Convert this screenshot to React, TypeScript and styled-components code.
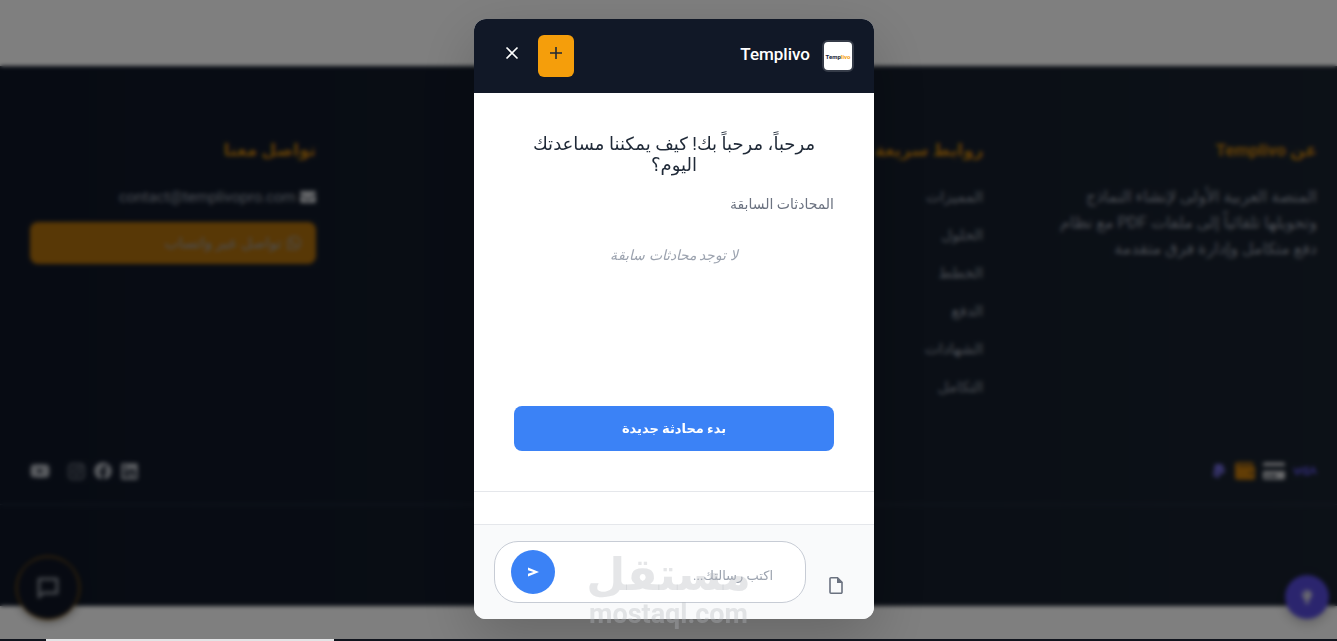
import React from 'react';
import styled, { createGlobalStyle } from 'styled-components';
import {
  FaEnvelope, FaWhatsapp, FaYoutube, FaInstagram, FaFacebook, FaLinkedin,
  FaPaypal, FaWallet, FaCreditCard, FaLightbulb,
} from 'react-icons/fa';

const GlobalStyle = createGlobalStyle`
  *, *::before, *::after { box-sizing: border-box; }
  body {
    margin: 0;
    background: #fff;
    font-family: Roboto, 'DejaVu Sans', sans-serif;
    overflow: hidden;
  }
  button, input { font-family: inherit; }
  h1, h2, h3, p, ul { margin: 0; padding: 0; }
`;

const Page = styled.div`
  direction: rtl;
  min-height: 100vh;
  padding-top: 66px;
`;

const Footer = styled.footer`
  display: flex;
  flex-direction: column;
  min-height: 540px;
  padding-top: 68px;
  background: linear-gradient(270deg, #19222f, #0f1727);
  color: #979eaa;
  font-size: 15px;
`;

const Columns = styled.div`
  display: grid;
  grid-template-columns: repeat(4, 1fr);
  gap: 48px;
  padding: 0 20px 0 30px;
`;

const Column = styled.section<{ $start?: number }>`
  grid-column-start: ${(p) => p.$start ?? 'auto'};
`;

const ColumnTitle = styled.h3`
  margin-bottom: 18px;
  color: #c9810c;
  font-size: 17px;
  font-weight: 700;
  line-height: 32px;
`;

const About = styled.p`
  font-size: 16px;
  line-height: 26px;
  white-space: nowrap;
`;

const LinkList = styled.ul`
  display: flex;
  flex-direction: column;
  gap: 12px;
  list-style: none;
`;

const FooterLink = styled.a`
  display: flex;
  align-items: center;
  gap: 4px;
  color: inherit;
  line-height: 26px;
  text-decoration: none;
`;

const WhatsAppLink = styled(FooterLink)`
  height: 42px;
  margin-top: 12px;
  padding: 0 14px;
  border-radius: 8px;
  background: #b1700c;
`;

const IconBar = styled.div`
  display: flex;
  justify-content: space-between;
  align-items: center;
  margin-top: auto;
  padding: 0 20px 22px 30px;
  border-bottom: 1px solid #2a3546;
`;

const IconGroup = styled.div`
  display: flex;
  align-items: center;
  gap: 8px;
`;

const IconLink = styled.a<{ $color?: string; $gap?: number }>`
  display: flex;
  margin-inline-start: ${(p) => p.$gap ?? 0}px;
  color: ${(p) => p.$color ?? '#b4b9c1'};
`;

const Legal = styled.div`
  height: 101px;
`;

const Fab = styled.button<{ $size: number }>`
  display: flex;
  align-items: center;
  justify-content: center;
  position: fixed;
  width: ${(p) => p.$size}px;
  height: ${(p) => p.$size}px;
  padding: 0;
  border: 0;
  border-radius: 50%;
`;

const ChatFab = styled(Fab)`
  left: 16px;
  bottom: 21px;
  border: 1px solid #c47f0c;
  background: #0f1524;
  color: #8a909a;
  box-shadow: 0 2px 8px rgba(0, 0, 0, 0.4);
`;

const TipFab = styled(Fab)`
  right: 8px;
  bottom: 22px;
  background: #574bdd;
  color: #d5d5e0;
  box-shadow: 0 4px 12px rgba(0, 0, 0, 0.25);
`;

const Overlay = styled.div`
  display: flex;
  align-items: center;
  justify-content: center;
  position: fixed;
  inset: 0;
  padding: 0 0 3px 11px;
  direction: rtl;
  background: rgba(0, 0, 0, 0.5);
  backdrop-filter: blur(2px);
`;

const Dialog = styled.div`
  display: flex;
  flex-direction: column;
  width: 400px;
  max-width: 100%;
  height: 600px;
  overflow: hidden;
  border-radius: 12px;
  background: #fff;
  box-shadow: 0 20px 60px rgba(0, 0, 0, 0.2);
`;

const DialogHeader = styled.header`
  display: flex;
  align-items: center;
  gap: 8px;
  height: 74px;
  padding: 0 20px;
  background: #111827;
`;

const Avatar = styled.span`
  display: flex;
  align-items: center;
  justify-content: center;
  width: 32px;
  height: 32px;
  border: 2px solid #353b48;
  border-radius: 6px;
  background: #fff;
  color: #20263a;
  direction: ltr;
  font-size: 6px;
  font-weight: 700;
`;

const Accent = styled.span`
  color: #f59e0b;
`;

const DialogTitle = styled.h2`
  flex: 1;
  padding: 0 4px 4px 0;
  color: #fff;
  font-size: 17px;
  font-weight: 500;
`;

const HeaderButton = styled.button<{ $filled?: boolean }>`
  display: flex;
  align-items: center;
  justify-content: center;
  width: 36px;
  height: 42px;
  padding: 0 0 6px;
  border: 0;
  border-radius: 6px;
  background: ${(p) => (p.$filled ? '#f59e0b' : 'transparent')};
  color: ${(p) => (p.$filled ? '#1f2937' : '#fff')};
`;

const DialogBody = styled.div`
  display: flex;
  flex: 1;
  flex-direction: column;
  padding: 40px;
`;

const Welcome = styled.p`
  color: #1f2937;
  font-size: 18px;
  line-height: 21px;
  text-align: center;
`;

const HistoryTitle = styled.h3`
  margin-top: 17px;
  color: #6b7280;
  font-size: 14px;
  font-weight: 500;
  line-height: 24px;
`;

const Empty = styled.p`
  margin-top: 27px;
  color: #9ca3af;
  font-size: 14px;
  font-style: italic;
  line-height: 24px;
  text-align: center;
`;

const StartButton = styled.button`
  height: 45px;
  margin-top: auto;
  border: 0;
  border-radius: 8px;
  background: #3b82f6;
  color: #fff;
  font-size: 13px;
  font-weight: 700;
`;

const Divider = styled.div`
  height: 33px;
  border-top: 1px solid #e5e7eb;
`;

const Composer = styled.form`
  display: flex;
  gap: 12px;
  padding: 16px 20px;
  border-top: 1px solid #e5e7eb;
  background: #f9fafb;
`;

const AttachButton = styled.button`
  display: flex;
  align-items: flex-end;
  justify-content: center;
  width: 36px;
  padding: 0 0 9px;
  border: 0;
  background: none;
`;

const Field = styled.div`
  display: flex;
  flex: 1;
  align-items: center;
  height: 62px;
  padding: 0 32px 0 16px;
  border: 1px solid #c7ccd5;
  border-radius: 24px;
  background: #fff;
`;

const MessageInput = styled.input`
  flex: 1;
  min-width: 0;
  padding: 6px 0 0;
  border: 0;
  outline: 0;
  background: none;
  font-size: 13px;
  &::placeholder { color: #9ca3af; }
`;

const SendButton = styled.button`
  display: flex;
  align-items: center;
  justify-content: center;
  width: 44px;
  height: 44px;
  padding: 0;
  border: 0;
  border-radius: 50%;
  background: #3b82f6;
`;

const Watermark = styled.div`
  display: flex;
  flex-direction: column;
  align-items: center;
  position: fixed;
  left: 50%;
  bottom: 13px;
  width: 162px;
  margin-left: -81px;
  color: rgba(180, 184, 190, 0.35);
  white-space: nowrap;
  pointer-events: none;
`;

const MarkName = styled.div`
  font-family: 'DejaVu Sans', sans-serif;
  font-size: 45px;
  font-weight: 700;
  line-height: 50px;
`;

const MarkDomain = styled.div`
  font-size: 27px;
  font-weight: 700;
  line-height: 28px;
`;

const BottomStrip = styled.div`
  position: fixed;
  inset: auto 0 0 0;
  height: 2px;
  padding-left: 46px;
  background: #10141d;
`;

const StripHighlight = styled.div`
  width: 288px;
  height: 2px;
  background: #e3e4e6;
`;

const links = ['المميزات', 'الحلول', 'الخطط', 'الدفع', 'الشهادات', 'التكامل'];

export default function App() {
  return (
    <>
      <GlobalStyle />
      <Page>
        <Footer>
          <Columns>
            <Column>
              <ColumnTitle>عن Templivo</ColumnTitle>
              <About>
                المنصة العربية الأولى لإنشاء النماذج<br />
                وتحويلها تلقائياً إلى ملفات PDF مع نظام<br />
                دفع متكامل وإدارة فرق متقدمة
              </About>
            </Column>
            <Column>
              <ColumnTitle>روابط سريعة</ColumnTitle>
              <LinkList>
                {links.map((l) => (
                  <li key={l}><FooterLink href="#">{l}</FooterLink></li>
                ))}
              </LinkList>
            </Column>
            <Column $start={4}>
              <ColumnTitle>تواصل معنا</ColumnTitle>
              <FooterLink href="mailto:contact@templivopro.com">
                <FaEnvelope size={16} color="#d0d3d8" />contact@templivopro.com
              </FooterLink>
              <WhatsAppLink href="#"><FaWhatsapp size={16} />تواصل عبر واتساب</WhatsAppLink>
            </Column>
          </Columns>
          <IconBar>
            <IconGroup>
              <IconLink href="#" $color="#5b52d8" aria-label="Visa">
                <svg width="24" height="16" viewBox="0 0 24 16" fill="none" stroke="currentColor" strokeWidth="2">
                  <path d="M1 5l3 6 3-6M9 5v6M16 5h-4l3 6h-4M17 11l3-6 3 6" />
                </svg>
              </IconLink>
              <IconLink href="#" $color="#d4d6da" aria-label="Card"><FaCreditCard size={22} /></IconLink>
              <IconLink href="#" $color="#c47a0c" aria-label="Wallet"><FaWallet size={20} /></IconLink>
              <IconLink href="#" $color="#6f68d8" aria-label="PayPal"><FaPaypal size={16} /></IconLink>
            </IconGroup>
            <IconGroup>
              <IconLink href="#" aria-label="LinkedIn"><FaLinkedin size={19} /></IconLink>
              <IconLink href="#" aria-label="Facebook"><FaFacebook size={18} /></IconLink>
              <IconLink href="#" $color="#858b96" aria-label="Instagram"><FaInstagram size={19} /></IconLink>
              <IconLink href="#" $gap={9} aria-label="YouTube"><FaYoutube size={20} /></IconLink>
            </IconGroup>
          </IconBar>
          <Legal />
        </Footer>
        <ChatFab $size={64} type="button" aria-label="محادثة">
          <svg width="22" height="22" viewBox="0 0 22 22" fill="none" stroke="currentColor" strokeWidth="3">
            <path d="M2 20V2h18v14H6z" strokeLinejoin="round" />
          </svg>
        </ChatFab>
        <TipFab $size={44} type="button" aria-label="نصائح"><FaLightbulb size={14} /></TipFab>
      </Page>

      <Overlay>
        <Dialog role="dialog" aria-label="Templivo">
          <DialogHeader>
            <Avatar>Temp<Accent>livo</Accent></Avatar>
            <DialogTitle>Templivo</DialogTitle>
            <HeaderButton $filled type="button" aria-label="محادثة جديدة">
              <svg width="14" height="14" viewBox="0 0 14 14" stroke="currentColor" strokeWidth="1.6">
                <path d="M7 1v12M1 7h12" />
              </svg>
            </HeaderButton>
            <HeaderButton type="button" aria-label="إغلاق">
              <svg width="14" height="14" viewBox="0 0 14 14" stroke="currentColor" strokeWidth="1.6">
                <path d="M1.500 1.500l11 11M12.500 1.500l-11 11" />
              </svg>
            </HeaderButton>
          </DialogHeader>
          <DialogBody>
            <Welcome>مرحباً، مرحباً بك! كيف يمكننا مساعدتك اليوم؟</Welcome>
            <HistoryTitle>المحادثات السابقة</HistoryTitle>
            <Empty>لا توجد محادثات سابقة</Empty>
            <StartButton type="button">بدء محادثة جديدة</StartButton>
          </DialogBody>
          <Divider />
          <Composer onSubmit={(e) => e.preventDefault()}>
            <AttachButton type="button" aria-label="إرفاق ملف">
              <svg width="14" height="17" viewBox="0 0 14 17" fill="none" stroke="#6b7280" strokeWidth="1.6">
                <path d="M1 1.800a1 1 0 0 1 1-1h6.500L13 5.300v9.900a1 1 0 0 1-1 1H2a1 1 0 0 1-1-1z" />
                <path d="M8 0.500V6h5.500z" fill="#6b7280" stroke="none" />
              </svg>
            </AttachButton>
            <Field>
              <MessageInput aria-label="رسالتك" placeholder="اكتب رسالتك..." />
              <SendButton type="submit" aria-label="إرسال">
                <svg width="11" height="10" viewBox="0 0 11 10" fill="#fff">
                  <path d="M0 0.500L11 5L0 9.500V6.800L5.500 5L0 3.200z" />
                </svg>
              </SendButton>
            </Field>
          </Composer>
        </Dialog>
      </Overlay>
      <BottomStrip><StripHighlight /></BottomStrip>
      <Watermark>
        <MarkName>مستقل</MarkName>
        <MarkDomain>mostaql.com</MarkDomain>
      </Watermark>
    </>
  );
}
